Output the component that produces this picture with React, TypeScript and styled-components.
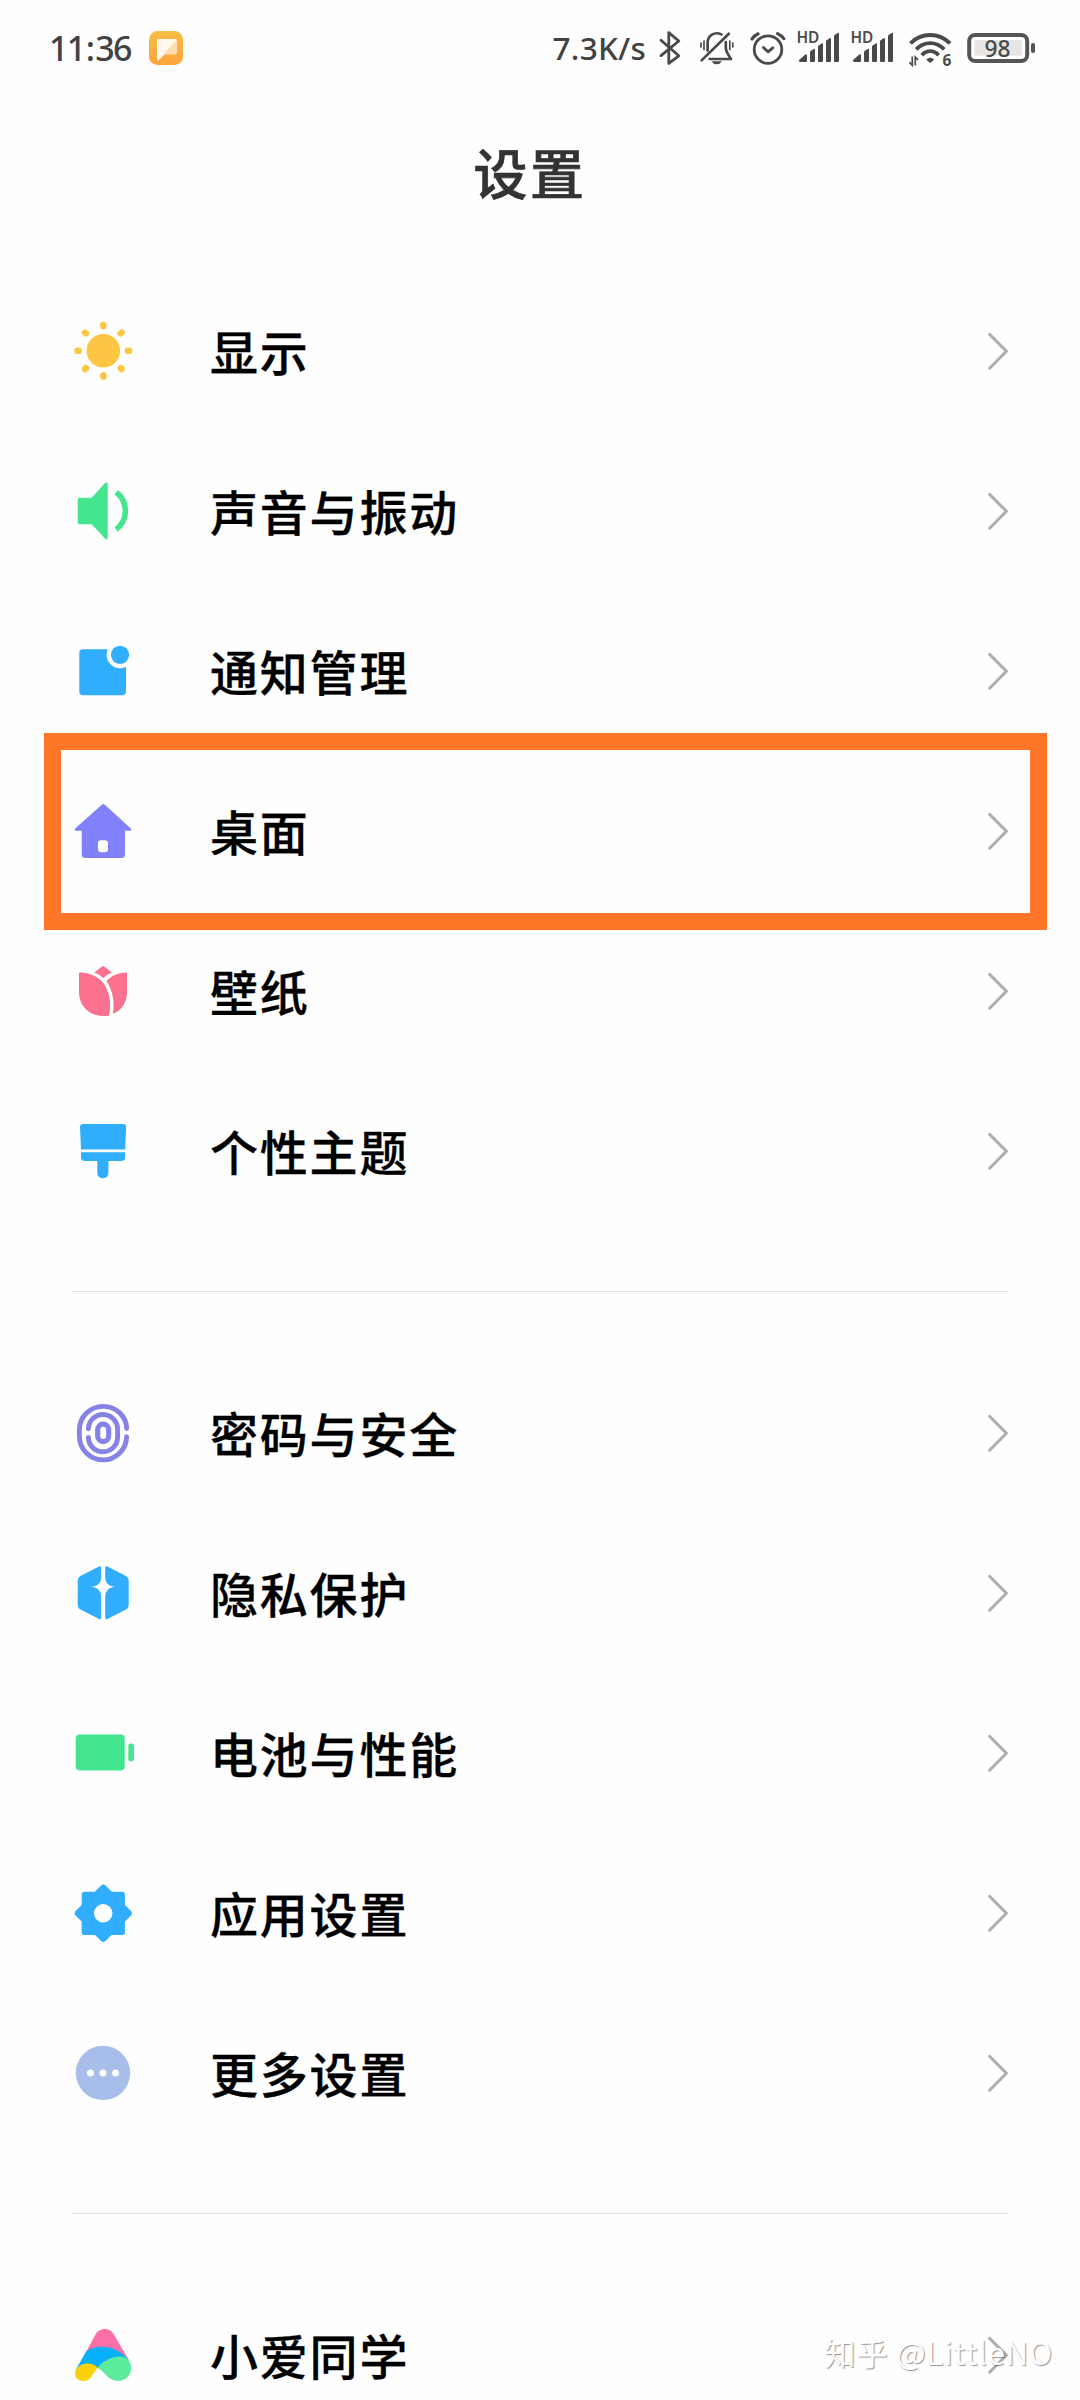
import React from "react";
import styled, { createGlobalStyle } from "styled-components";

const GlobalStyle = createGlobalStyle`
  * { box-sizing: border-box; }
  body { margin: 0; background: #fefefe; }
`;

const CJK = `"Noto Sans CJK SC", sans-serif`;
const LATIN = `"Noto Sans", "Noto Sans CJK SC", sans-serif`;
const INK = "#4a4a4a";
const BLUE = "#30adfd";
const GREEN = "#43e58e";
const VIOLET = "#8280fb";
const PINK = "#fd7190";

const Screen = styled.div`
  position: relative;
  width: 1080px;
  height: 2400px;
  overflow: hidden;
  background: #fefefe;
  font-family: ${CJK};
  color: #000;
`;

const StatusBar = styled.header`
  display: flex;
  align-items: center;
  justify-content: space-between;
  height: 96px;
  padding: 0 43px 0 49px;
`;

const StatusGroup = styled.div<{ $gap: number }>`
  display: flex;
  align-items: center;
  gap: ${(p) => p.$gap}px;
`;

const StatusText = styled.span<{ $size: number; $tracking: number; $pad: number }>`
  font-family: ${LATIN};
  font-size: ${(p) => p.$size}px;
  letter-spacing: ${(p) => p.$tracking}px;
  padding-right: ${(p) => p.$pad}px;
  font-weight: 500;
  line-height: 40px;
  color: #424242;
  white-space: nowrap;
`;

const Colon = styled.span`
  margin: 0 2px 0 1.4px;
`;

const StatusSvg = styled.svg`
  display: block;
  flex: none;
  height: 40px;
  overflow: visible;
`;

const SvgLabel = styled.text<{ $size: number; $weight: number }>`
  font-family: ${LATIN};
  font-size: ${(p) => p.$size}px;
  font-weight: ${(p) => p.$weight};
  fill: ${INK};
`;

const TitleBar = styled.div`
  display: flex;
  justify-content: center;
  align-items: center;
  height: 175px;
  padding: 0 20px 24px 0;
`;

const Title = styled.h1`
  margin: 0;
  font-size: 54px;
  line-height: 80px;
  font-weight: 500;
  letter-spacing: 2.6px;
  color: #333;
  -webkit-text-stroke: 0.7px #333;
`;

const Group = styled.ul`
  list-style: none;
  margin: 0;
  padding: 0;
`;

const Divider = styled.hr`
  height: 1px;
  margin: 60px 71px 61px;
  border: 0;
  background: #e3e3e3;
`;

const Row = styled.li`
  position: relative;
  display: flex;
  align-items: center;
  height: 160px;
  padding: 0 70px 0 73px;
`;

const Highlight = styled.div`
  position: absolute;
  top: -18px;
  left: 44px;
  width: 1003px;
  height: 197px;
  border: 17px solid #ff7628;
`;

const RowIcon = styled.svg`
  display: block;
  flex: none;
  width: 60px;
  height: 60px;
  overflow: visible;
`;

const Label = styled.span`
  flex: 1;
  margin-left: 77px;
  padding-bottom: 3px;
  font-size: 48px;
  line-height: 72px;
  font-weight: 500;
  letter-spacing: 1.8px;
  -webkit-text-stroke: 0.3px #000;
`;

const Chevron = styled.svg`
  display: block;
  flex: none;
  width: 24px;
  height: 40px;
`;

const Watermark = styled.div`
  position: absolute;
  right: 27px;
  bottom: 25px;
  font-size: 31px;
  line-height: 46px;
  letter-spacing: 0.9px;
  color: #fff;
  text-shadow: 1px 1px 1px rgba(0, 0, 0, 0.42);
  white-space: nowrap;
`;

const icons: Record<string, React.ReactNode> = {
  sun: (
    <g fill="#fdc642">
      <circle cx="30.3" cy="29.8" r="16.8" />
      {[0, 45, 90, 135, 180, 225, 270, 315].map((a) => (
        <rect key={a} x="27.1" y="0.8" width="6.4" height="7.6" rx="3.1" transform={`rotate(${a} 30.3 29.8)`} />
      ))}
    </g>
  ),
  sound: (
    <g>
      <path
        d="M6.7 16.7H18.7L31.8 2.2Q34.7 0 34.7 3V56.6Q34.7 59.6 31.8 57.3L18.7 43.2H6.7Q4.7 43.2 4.7 41.2V18.7Q4.7 16.7 6.7 16.7Z"
        fill={GREEN}
      />
      <path d="M43.2 11.2A23.4 23.4 0 0 1 43.2 48.4" fill="none" stroke={GREEN} strokeWidth="5.6" />
    </g>
  ),
  notice: (
    <g>
      <rect x="6.3" y="8.3" width="46.7" height="45.9" rx="3.6" fill={BLUE} />
      <circle cx="47" cy="13.8" r="13.4" fill="#fefefe" />
      <circle cx="47" cy="13.8" r="9.1" fill={BLUE} />
    </g>
  ),
  home: (
    <path
      fillRule="evenodd"
      fill={VIOLET}
      d="M28.8 3.7Q30.3 2.5 31.8 3.7L57.8 27.6Q59.3 29.6 57 29.8H52V53.5Q52 57 48.5 57H12.2Q8.7 57 8.7 53.5V29.8H3Q.7 29.6 2.2 27.6ZM28 39.2Q25 39.2 25 42.2V48.2Q25 51.2 28 51.2H32Q35 51.2 35 48.2V42.2Q35 39.2 32 39.2Z"
    />
  ),
  tulip: (
    <g fill={PINK}>
      <path d="M28.6 5.8Q30.1 4.4 31.6 5.8L38.9 11.6Q33.5 13.6 30.2 17.2Q26.5 13.4 21.4 11.6Z" />
      <path d="M6 12.6Q6 11.6 7.2 11.6C18 11.8 27.5 16.6 32.6 25.6C37.3 34 38 44 36.2 53.9Q35.8 55 34.6 55H29.6C14 54.4 6 43 6 31Z" />
      <path d="M54 12.6Q54 11.6 52.8 11.6C45 12 38.2 14.8 33.5 20C39.5 28.6 42 41 39.9 52.8C49.6 49 54 40.5 54 31Z" />
    </g>
  ),
  brush: (
    <g fill={BLUE}>
      <path d="M10 3H50.2Q53.2 3 53.1 6L52.2 28.4H8L7 6Q7 3 10 3Z" />
      <path d="M8 31.3H52.2V36Q52.2 39.9 48.2 39.9H35.4V51.8Q35.4 57.2 29.9 57.2Q24.3 57.2 24.3 51.8V39.9H12Q8 39.9 8 36Z" />
    </g>
  ),
  finger: (
    <g fill="none" stroke="#8683e6" strokeWidth="4.9" strokeLinecap="round">
      <path d="M53.6 25.6A23.6 22.2 0 0 0 30 3.4A23.6 23.6 0 0 0 6.4 27V33A23.6 23.6 0 0 0 53.6 33.6" />
      <path d="M15.4 25.8A14.6 14.6 0 0 1 44.6 26.4V34A14.6 14.6 0 0 1 15.4 34.4" />
      <rect x="24.7" y="21.2" width="11" height="17.4" rx="5.5" strokeWidth="5.2" />
    </g>
  ),
  privacy: (
    <g fill={BLUE}>
      <path d="M26 3.5Q28.2 2.4 28.2 4.6V13.4C28.2 19.8 25 23 18.3 23.8C25 24.6 28.2 28 28.2 34.4V54.8Q28.2 57 26 55.9L7.4 46.6Q4.7 45 4.7 42V17.6Q4.7 14.6 7.4 13.1Z" />
      <path d="M34.4 3.5Q32.2 2.4 32.2 4.6V13.4C32.2 19.8 35.4 23 42 23.8C35.4 24.6 32.2 28 32.2 34.4V54.8Q32.2 57 34.4 55.9L53 46.6Q55.7 45 55.7 42V17.6Q55.7 14.6 53 13.1Z" />
    </g>
  ),
  battery: (
    <g fill={GREEN}>
      <rect x="2.7" y="11.6" width="49" height="35.8" rx="3.8" />
      <rect x="55.3" y="20.4" width="5.6" height="18" rx="2.4" />
    </g>
  ),
  gear: (
    <g>
      <g fill={BLUE} stroke={BLUE} strokeLinejoin="round">
        <rect x="11.2" y="11.2" width="38.2" height="38.2" strokeWidth="5" />
        <path d="M30.3 5.3L55.3 30.3L30.3 55.3L5.3 30.3Z" strokeWidth="7" />
      </g>
      <circle cx="30.2" cy="30.2" r="9.2" fill="#fefefe" />
    </g>
  ),
  more: (
    <g>
      <circle cx="30" cy="29.9" r="27.2" fill="#a8beea" />
      <g fill="#fefefe">
        <circle cx="17.4" cy="29.9" r="3.5" />
        <circle cx="30" cy="29.9" r="3.5" />
        <circle cx="42.6" cy="29.9" r="3.5" />
      </g>
    </g>
  ),
  xiaoai: (
    <g>
      <path d="M12.8 27.5L22 10.5C26 2 37 2 41.2 10L56 35.5L30 30Z" fill="#fa6fa5" />
      <path d="M3.2 44L12.8 27C22 18.6 44 19.5 56 35.5L40 44L24.5 43L12 50Z" fill="#08b0fb" />
      <path d="M3 44.5C7.5 37.5 19 36.5 24.6 42.4L17.8 52.3C14.5 57 7.5 57.3 4 53.6C1.5 50.8 1.6 47 3 44.5Z" fill="#fbd00d" />
      <path d="M24.6 42.4C31 34.5 47 26.8 55.4 34.8C60.5 42 58.5 52 50 55C44.5 57 38 55.6 34.5 51.6C31.5 48 28 45 24.6 42.4Z" fill="#5dec9d" />
    </g>
  ),
};

type Item = { icon: string; label: string; highlighted?: boolean };

const groups: Item[][] = [
  [
    { icon: "sun", label: "显示" },
    { icon: "sound", label: "声音与振动" },
    { icon: "notice", label: "通知管理" },
    { icon: "home", label: "桌面", highlighted: true },
    { icon: "tulip", label: "壁纸" },
    { icon: "brush", label: "个性主题" },
  ],
  [
    { icon: "finger", label: "密码与安全" },
    { icon: "privacy", label: "隐私保护" },
    { icon: "battery", label: "电池与性能" },
    { icon: "gear", label: "应用设置" },
    { icon: "more", label: "更多设置" },
  ],
  [{ icon: "xiaoai", label: "小爱同学" }],
];

const SettingRow = ({ icon, label, highlighted }: Item) => (
  <Row>
    <RowIcon viewBox="0 0 60 60">{icons[icon]}</RowIcon>
    <Label>{label}</Label>
    <Chevron viewBox="0 0 24 40">
      <path d="M3.6 3.4L20.4 20.3L3.6 37.2" fill="none" stroke="#aeaeae" strokeWidth="3" strokeLinecap="round" />
    </Chevron>
    {highlighted && <Highlight />}
  </Row>
);

const NoteIcon = () => (
  <StatusSvg width="34" viewBox="149 28 34 40">
    <defs>
      <linearGradient id="note" x1="0" y1="0" x2="0" y2="1">
        <stop offset="0" stopColor="#f8bd47" />
        <stop offset="1" stopColor="#fda33c" />
      </linearGradient>
    </defs>
    <rect x="149" y="31" width="34" height="34" rx="8.5" fill="url(#note)" />
    <path d="M158 39H175.7Q176.7 39 176.7 40V53.3Q176.7 54.3 175.7 54.3H164.6L158.4 60.4Q157 61.4 157 59.8V40Q157 39 158 39Z" fill="#fff8ec" />
    <path d="M176.7 40V53.3Q176.7 54.3 175.7 54.3H163.6Z" fill="#fddcae" />
  </StatusSvg>
);

const BluetoothIcon = () => (
  <StatusSvg width="30" viewBox="656 28 30 40">
    <path d="M661 40.2L678.8 55.8L668.8 63.4V32.6L678.8 41L661 55.6" fill="none" stroke={INK} strokeWidth="2.8" strokeLinejoin="round" strokeLinecap="round" />
  </StatusSvg>
);

const MuteIcon = () => (
  <StatusSvg width="46" viewBox="694 28 46 40">
    <g fill="none" stroke={INK} strokeWidth="2.7" strokeLinecap="round" strokeLinejoin="round">
      <path d="M701.6 60.4L728.8 33.8" />
      <path d="M707.6 50.6V43.4C707.6 35.4 714.5 31.2 721.4 34.4" />
      <path d="M725.8 42V47.6C725.8 52.4 729 55.4 731 59H709.6" />
      <path d="M701 43V47M704 41.2V49.4M729.8 41.2V49.4M732.8 43V47" strokeWidth="1.7" />
    </g>
    <path d="M711.4 61.2H722Q720 64.2 716.7 64.2Q713.4 64.2 711.4 61.2Z" fill={INK} />
  </StatusSvg>
);

const AlarmIcon = () => (
  <StatusSvg width="40" viewBox="748 28 40 40">
    <g fill="none" stroke={INK} strokeWidth="2.8" strokeLinecap="round" strokeLinejoin="round">
      <circle cx="768" cy="49.6" r="13.8" />
      <path d="M763.4 47.4L768 51.8L772.8 47.8" />
      <path d="M752 39Q754.4 35.6 758 33.8M777.6 33.6Q781.4 35.4 783.8 38.6" strokeWidth="3.2" />
    </g>
  </StatusSvg>
);

const SignalIcon = () => (
  <StatusSvg width="46" viewBox="796 28 46 40">
    <SvgLabel x="796.4" y="43.2" $size={15.4} $weight={600}>HD</SvgLabel>
    <g fill={INK}>
      <path d="M800 62Q798 61.6 799.6 59.6L805 54.8Q807 53.4 807 55.6V61Q807 62 806 62Z" />
      <path d="M810 51.5L813.6 49Q815 48.4 815 50V61Q815 62 814 62H811Q810 62 810 61Z" />
      <path d="M818 46L821.6 43.4Q823 42.8 823 44.4V61Q823 62 822 62H819Q818 62 818 61Z" />
      <path d="M826 40.8L829.6 38.2Q831 37.6 831 39.2V61Q831 62 830 62H827Q826 62 826 61Z" />
      <path d="M834 35.4L837.6 32.9Q839 32.3 839 33.9V61Q839 62 838 62H835Q834 62 834 61Z" />
    </g>
  </StatusSvg>
);

const WifiIcon = () => (
  <StatusSvg width="51" viewBox="904 28 51 40">
    <g fill="none" stroke={INK} strokeWidth="3.8">
      <path d="M910.4 43.4Q918.6 35 930.2 35Q941.8 35 950 43.4" />
      <path d="M916.2 49.4Q922 43.2 930.2 43.2Q938.4 43.2 944.2 49.4" />
      <path d="M921.8 55.2Q925.4 51.2 930.2 51.2Q935 51.2 938.6 55.2" />
    </g>
    <path d="M926.2 59.6Q930.2 55.8 934.2 59.6L931 62.4Q930.2 63 929.4 62.4Z" fill={INK} />
    <path d="M912.3 56.4V65.2L909.4 62.4M915.3 65.4V57L918 59.8" fill="none" stroke={INK} strokeWidth="1.7" />
    <SvgLabel x="942.6" y="65.8" $size={15.4} $weight={700}>6</SvgLabel>
  </StatusSvg>
);

const BatteryIcon = () => (
  <StatusSvg width="74" viewBox="963 28 74 40">
    <rect x="969.2" y="35" width="58" height="26" rx="6" fill="none" stroke="#555" strokeWidth="4" />
    <rect x="974.3" y="40" width="47.5" height="15.8" rx="2" fill="#e5e5e5" />
    <rect x="1031" y="43" width="4" height="10" rx="1.8" fill="#555" />
    <SvgLabel x="984.4" y="56.6" $size={22.8} $weight={500}>98</SvgLabel>
  </StatusSvg>
);

export default function App() {
  return (
    <Screen>
      <GlobalStyle />
      <StatusBar>
        <StatusGroup $gap={18}>
          <StatusText $size={34} $tracking={-1.75} $pad={0}>
            11<Colon>:</Colon>36
          </StatusText>
          <NoteIcon />
        </StatusGroup>
        <StatusGroup $gap={8}>
          <StatusText $size={31.6} $tracking={0.2} $pad={2}>7.3K/s</StatusText>
          <BluetoothIcon />
          <MuteIcon />
          <AlarmIcon />
          <SignalIcon />
          <SignalIcon />
          <WifiIcon />
          <BatteryIcon />
        </StatusGroup>
      </StatusBar>
      <TitleBar>
        <Title>设置</Title>
      </TitleBar>
      {groups.map((group, i) => (
        <React.Fragment key={i}>
          {i > 0 && <Divider />}
          <Group>
            {group.map((item) => (
              <SettingRow key={item.label} {...item} />
            ))}
          </Group>
        </React.Fragment>
      ))}
      <Watermark>知乎 @LittleNO</Watermark>
    </Screen>
  );
}
